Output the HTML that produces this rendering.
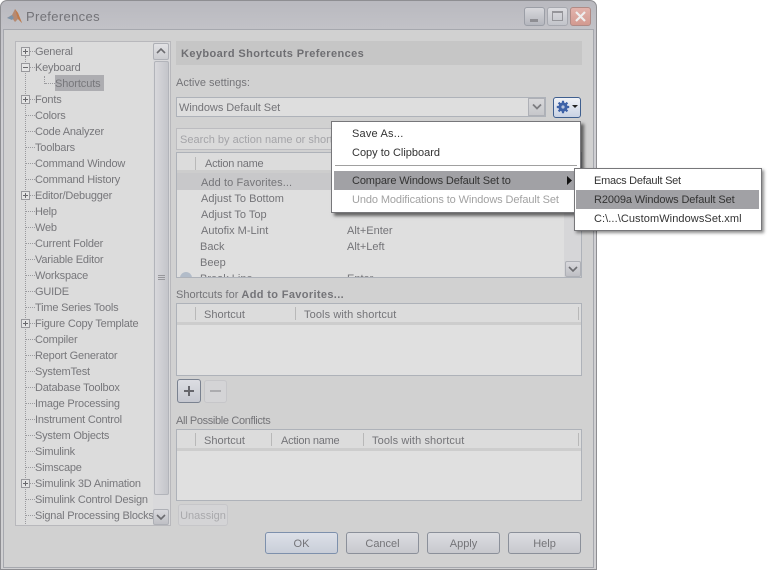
<!DOCTYPE html>
<html><head><meta charset="utf-8"><style>
html,body{margin:0;padding:0;background:#fff}
#r{position:relative;width:770px;height:570px;overflow:hidden;background:#fff;font:11px/16px "Liberation Sans",sans-serif;color:#77777b}
#r div,#r span.a{position:absolute}
.t{white-space:nowrap;height:16px;transform:translateY(1px)}
.tree{left:35px;letter-spacing:-.2px}
.h{color:#747478}
.box{background:#e0e0e0;border:1px solid #aeb2b9;box-sizing:border-box}
.btn{border:1px solid #8b909a;border-radius:3px;box-sizing:border-box;background:linear-gradient(#dcdde1,#c8c9ce);text-align:center;color:#747478;height:22px;line-height:22px;top:532px;width:73px}
.hd{background:#dcdcdc;border-bottom:3px solid #cdcdcd;box-sizing:border-box;height:20px}
.sep{width:1px;height:13px;background:#b8b8b8}
.m{color:#333;white-space:nowrap;height:16px;transform:translateY(1px)}
.pm{width:9px;height:9px;border:1px solid #98989c;box-sizing:border-box;background:#e4e4e4;left:21px}
.pm:before{content:"";position:absolute;left:1px;top:3px;width:5px;height:1px;background:#68686c}
.pl:after{content:"";position:absolute;left:3px;top:1px;width:1px;height:5px;background:#68686c}
.dh{height:0;border-top:1px dotted #9a9a9e}
.dv{width:0;border-left:1px dotted #9a9a9e}
</style></head><body><div id="r">

<!-- window -->
<div style="left:0;top:0;width:597px;height:570px;background:linear-gradient(#b9b9bf 0,#c4c4c9 34px,#cfcfd3 120px,#d0d0d2 100%);border:1px solid #8e8e92;border-bottom:0;border-radius:7px 7px 0 0;box-sizing:border-box"></div>
<div style="left:3px;top:29px;width:591px;height:539px;background:#d1d1d1;border:1px solid #a6a8ae;box-sizing:border-box"></div>
<div style="left:0;top:569px;width:597px;height:1px;background:#8e8e92"></div>

<!-- title -->
<svg style="position:absolute;left:6px;top:8px" width="17" height="17" viewBox="0 0 17 17"><path d="M1 10L6 7 9 1 12 5 16 15 12 11 9 14 6 10z" fill="#b58a72"/><path d="M1 10L6 7 8 10 6 12z" fill="#7d93a8"/><path d="M9 1L12 5 16 15 12 11z" fill="#c07a4a"/></svg>
<div class="t" style="left:26px;top:8px;font-size:13px;letter-spacing:.35px;color:#737378">Preferences</div>

<!-- window buttons -->
<div style="left:524px;top:7px;width:21px;height:19px;border:1px solid #9b9ea6;border-radius:3px;box-sizing:border-box;background:linear-gradient(#d8d8dc,#b4b6bd)"><div style="left:5px;top:11px;width:8px;height:3px;background:#8e8e93"></div></div>
<div style="left:547px;top:7px;width:21px;height:19px;border:1px solid #a6a8af;border-radius:3px;box-sizing:border-box;background:linear-gradient(#dcdce0,#c2c4ca)"><div style="left:4px;top:3px;width:11px;height:10px;border:1px solid #95959a;border-top-width:2px;box-sizing:border-box"></div></div>
<div style="left:570px;top:7px;width:21px;height:19px;border:1px solid #b08a85;border-radius:3px;box-sizing:border-box;background:linear-gradient(#e2b3ac,#d39a90)"><svg style="position:absolute;left:3px;top:2px" width="13" height="13"><path d="M2 2L11 11M11 2L2 11" stroke="#eee" stroke-width="2.2"/></svg></div>

<!-- tree panel -->
<div class="box" style="left:15px;top:41px;width:156px;height:485px;background:#dcdcdc;border-color:#b8b8bc"></div>
<div style="left:153px;top:42px;width:17px;height:483px;background:#d9d9db"></div>
<div style="left:153px;top:43px;width:16px;height:17px;border:1px solid #aeb0b6;border-radius:2px;box-sizing:border-box;background:linear-gradient(#e2e2e5,#cbccd0)"></div>
<svg style="position:absolute;left:156px;top:47px" width="10" height="8"><path d="M1 6L5 2 9 6" fill="none" stroke="#6c6c70" stroke-width="1.6"/></svg>
<div style="left:154px;top:61px;width:15px;height:434px;border:1px solid #b2b4ba;border-radius:2px;box-sizing:border-box;background:linear-gradient(90deg,#d8d8dc,#c4c5ca)"></div>
<div style="left:158px;top:275px;width:7px;height:1px;background:#97979b;box-shadow:0 2px #97979b,0 4px #97979b"></div>
<div style="left:153px;top:509px;width:16px;height:16px;border:1px solid #aeb0b6;border-radius:2px;box-sizing:border-box;background:linear-gradient(#d8d8dc,#bfc0c5)"></div>
<svg style="position:absolute;left:156px;top:513px" width="10" height="8"><path d="M1 2L5 6 9 2" fill="none" stroke="#6c6c70" stroke-width="1.6"/></svg>

<!-- tree guides -->
<div class="dv" style="left:25px;top:56px;height:468px"></div>
<div class="dv" style="left:44px;top:76px;height:8px"></div>
<div class="dh" style="left:45px;top:83px;width:10px"></div>
<div style="left:55px;top:75px;width:49px;height:16px;background:#adadb1"></div>

<div class="dh" style="left:30px;top:51px;width:5px"></div>
<div class="dh" style="left:30px;top:67px;width:5px"></div>
<div class="dh" style="left:30px;top:99px;width:5px"></div>
<div class="dh" style="left:26px;top:115px;width:9px"></div>
<div class="dh" style="left:26px;top:131px;width:9px"></div>
<div class="dh" style="left:26px;top:147px;width:9px"></div>
<div class="dh" style="left:26px;top:163px;width:9px"></div>
<div class="dh" style="left:26px;top:179px;width:9px"></div>
<div class="dh" style="left:30px;top:195px;width:5px"></div>
<div class="dh" style="left:26px;top:211px;width:9px"></div>
<div class="dh" style="left:26px;top:227px;width:9px"></div>
<div class="dh" style="left:26px;top:243px;width:9px"></div>
<div class="dh" style="left:26px;top:259px;width:9px"></div>
<div class="dh" style="left:26px;top:275px;width:9px"></div>
<div class="dh" style="left:26px;top:291px;width:9px"></div>
<div class="dh" style="left:26px;top:307px;width:9px"></div>
<div class="dh" style="left:30px;top:323px;width:5px"></div>
<div class="dh" style="left:26px;top:339px;width:9px"></div>
<div class="dh" style="left:26px;top:355px;width:9px"></div>
<div class="dh" style="left:26px;top:371px;width:9px"></div>
<div class="dh" style="left:26px;top:387px;width:9px"></div>
<div class="dh" style="left:26px;top:403px;width:9px"></div>
<div class="dh" style="left:26px;top:419px;width:9px"></div>
<div class="dh" style="left:26px;top:435px;width:9px"></div>
<div class="dh" style="left:26px;top:451px;width:9px"></div>
<div class="dh" style="left:26px;top:467px;width:9px"></div>
<div class="dh" style="left:30px;top:483px;width:5px"></div>
<div class="dh" style="left:26px;top:499px;width:9px"></div>
<div class="dh" style="left:26px;top:515px;width:9px"></div>

<div class="pm pl" style="top:47px"></div>
<div class="pm" style="top:63px"></div>
<div class="pm pl" style="top:95px"></div>
<div class="pm pl" style="top:191px"></div>
<div class="pm pl" style="top:319px"></div>
<div class="pm pl" style="top:479px"></div>

<div class="t tree" style="top:43px">General</div>
<div class="t tree" style="top:59px">Keyboard</div>
<div class="t" style="left:55px;top:75px;letter-spacing:-.1px">Shortcuts</div>
<div class="t tree" style="top:91px">Fonts</div>
<div class="t tree" style="top:107px">Colors</div>
<div class="t tree" style="top:123px">Code Analyzer</div>
<div class="t tree" style="top:139px">Toolbars</div>
<div class="t tree" style="top:155px">Command Window</div>
<div class="t tree" style="top:171px">Command History</div>
<div class="t tree" style="top:187px">Editor/Debugger</div>
<div class="t tree" style="top:203px">Help</div>
<div class="t tree" style="top:219px">Web</div>
<div class="t tree" style="top:235px">Current Folder</div>
<div class="t tree" style="top:251px">Variable Editor</div>
<div class="t tree" style="top:267px">Workspace</div>
<div class="t tree" style="top:283px">GUIDE</div>
<div class="t tree" style="top:299px">Time Series Tools</div>
<div class="t tree" style="top:315px">Figure Copy Template</div>
<div class="t tree" style="top:331px">Compiler</div>
<div class="t tree" style="top:347px">Report Generator</div>
<div class="t tree" style="top:363px">SystemTest</div>
<div class="t tree" style="top:379px">Database Toolbox</div>
<div class="t tree" style="top:395px">Image Processing</div>
<div class="t tree" style="top:411px">Instrument Control</div>
<div class="t tree" style="top:427px">System Objects</div>
<div class="t tree" style="top:443px">Simulink</div>
<div class="t tree" style="top:459px">Simscape</div>
<div class="t tree" style="top:475px">Simulink 3D Animation</div>
<div class="t tree" style="top:491px">Simulink Control Design</div>
<div class="t tree" style="top:507px;width:118px;overflow:hidden">Signal Processing Blocksets</div>

<!-- right header -->
<div style="left:176px;top:41px;width:406px;height:24px;background:#c6c6c6"></div>
<div class="t" style="left:181px;top:45px;font-weight:bold;letter-spacing:.4px;color:#6e6e72">Keyboard Shortcuts Preferences</div>
<div class="t h" style="left:176px;top:74px">Active settings:</div>

<!-- combo -->
<div class="box" style="left:176px;top:97px;width:370px;height:20px;background:#dedede"></div>
<div class="t h" style="left:179px;top:99px;letter-spacing:-.05px">Windows Default Set</div>
<div style="left:528px;top:98px;width:17px;height:18px;border:1px solid #aeb0b6;box-sizing:border-box;background:linear-gradient(#d8d8da,#c6c7cb)"></div>
<svg style="position:absolute;left:532px;top:103px" width="10" height="8"><path d="M1 1.5L5 5.5 9 1.5" fill="none" stroke="#7c7c80" stroke-width="1.8"/></svg>

<!-- gear button -->
<div style="left:553px;top:97px;width:28px;height:21px;border:1px solid #3f5f8f;border-radius:3px;box-sizing:border-box;background:linear-gradient(#f0f2f7,#c9d2e4)"></div>
<svg style="position:absolute;left:556px;top:100px" width="14" height="14" viewBox="0 0 14 14"><circle cx="7" cy="7" r="4.6" fill="#3e62a8"/><path d="M7 .8V13.2M.8 7H13.2M2.6 2.6L11.4 11.4M11.4 2.6L2.6 11.4" stroke="#3e62a8" stroke-width="2.2"/><circle cx="7" cy="7" r="1.6" fill="#b5c3de"/></svg>
<svg style="position:absolute;left:572px;top:105px" width="6" height="4"><path d="M0 0H6L3 3z" fill="#222"/></svg>

<!-- search -->
<div class="box" style="left:176px;top:128px;width:160px;height:22px;background:#dadada;border-color:#bcbcc0"></div>
<div class="t" style="left:180px;top:131px;color:#a4a4a8;width:152px;overflow:hidden">Search by action name or shortcut</div>

<!-- action table -->
<div class="box" style="left:176px;top:152px;width:406px;height:126px;background:#dfdfdf;overflow:hidden"></div>
<div class="hd" style="left:177px;top:153px;width:404px;height:20px"></div>
<div class="sep" style="left:195px;top:157px"></div>
<div class="t h" style="left:205px;top:155px;letter-spacing:-.25px">Action name</div>
<div style="left:177px;top:173px;width:154px;height:17px;background:#c8c8ca"></div>
<div class="t h" style="left:201px;top:174px;letter-spacing:.1px">Add to Favorites...</div>
<div class="t h" style="left:201px;top:190px">Adjust To Bottom</div>
<div class="t h" style="left:201px;top:206px">Adjust To Top</div>
<div class="t h" style="left:201px;top:222px">Autofix M-Lint</div>
<div class="t h" style="left:200px;top:238px">Back</div>
<div class="t h" style="left:200px;top:254px">Beep</div>
<div style="left:200px;top:271px;height:6px;overflow:hidden;width:70px;line-height:16px;white-space:nowrap">Break Line</div>
<div class="t h" style="left:347px;top:222px">Alt+Enter</div>
<div class="t h" style="left:347px;top:238px">Alt+Left</div>
<div style="left:347px;top:271px;height:6px;overflow:hidden;width:40px;line-height:16px">Enter</div>
<div style="left:180px;top:272px;width:12px;height:12px;border-radius:50%;background:#b2bcc9;clip-path:inset(0 0 7px 0)"></div>
<div style="left:564px;top:173px;width:17px;height:104px;background:#d6d6d8"></div>
<div style="left:565px;top:261px;width:16px;height:16px;border:1px solid #aeb0b6;border-radius:2px;box-sizing:border-box;background:linear-gradient(#d8d8dc,#bfc0c5)"></div>
<svg style="position:absolute;left:568px;top:265px" width="10" height="8"><path d="M1 2L5 6 9 2" fill="none" stroke="#6c6c70" stroke-width="1.6"/></svg>

<!-- shortcuts for -->
<div class="t h" style="left:176px;top:286px">Shortcuts for <b style="letter-spacing:.35px">Add to Favorites...</b></div>
<div class="box" style="left:176px;top:303px;width:406px;height:73px"></div>
<div class="hd" style="left:177px;top:304px;width:404px;height:21px"></div>
<div class="sep" style="left:195px;top:307px"></div>
<div class="sep" style="left:295px;top:307px"></div>
<div class="sep" style="left:578px;top:307px"></div>
<div class="t h" style="left:204px;top:306px">Shortcut</div>
<div class="t h" style="left:304px;top:306px;letter-spacing:.1px">Tools with shortcut</div>

<!-- plus minus -->
<div style="left:177px;top:379px;width:24px;height:24px;border:1px solid #7a8290;border-radius:3px;box-sizing:border-box;background:linear-gradient(#dcdde2,#c6c8d0)"></div>
<div style="left:184px;top:390px;width:10px;height:2px;background:#66666c"></div>
<div style="left:188px;top:386px;width:2px;height:10px;background:#66666c"></div>
<div style="left:204px;top:380px;width:23px;height:23px;border:1px solid #c6c6c9;border-radius:3px;box-sizing:border-box;background:#d4d4d6"></div>
<div style="left:210px;top:390px;width:11px;height:2px;background:#acacaf"></div>

<!-- conflicts -->
<div class="t h" style="left:176px;top:412px;letter-spacing:-.35px">All Possible Conflicts</div>
<div class="box" style="left:176px;top:429px;width:406px;height:72px"></div>
<div class="hd" style="left:177px;top:430px;width:404px;height:21px"></div>
<div class="sep" style="left:195px;top:433px"></div>
<div class="sep" style="left:271px;top:433px"></div>
<div class="sep" style="left:363px;top:433px"></div>
<div class="sep" style="left:578px;top:433px"></div>
<div class="t h" style="left:204px;top:432px">Shortcut</div>
<div class="t h" style="left:281px;top:432px;letter-spacing:-.25px">Action name</div>
<div class="t h" style="left:372px;top:432px;letter-spacing:.1px">Tools with shortcut</div>

<!-- unassign -->
<div style="left:178px;top:504px;width:50px;height:22px;border:1px solid #c6c6c9;border-radius:3px;box-sizing:border-box;background:#d4d4d6;color:#a9a9ac;text-align:center;line-height:22px">Unassign</div>

<!-- bottom buttons -->
<div class="btn" style="left:265px;border-color:#7d90ac;background:linear-gradient(#dde0e8,#c9ced8)">OK</div>
<div class="btn" style="left:346px">Cancel</div>
<div class="btn" style="left:427px">Apply</div>
<div class="btn" style="left:508px">Help</div>

<!-- main menu -->
<div style="left:331px;top:121px;width:250px;height:92px;background:#fff;border:1px solid #77777a;box-sizing:border-box;box-shadow:3px 3px 3px rgba(0,0,0,.55)"></div>
<div class="m" style="left:352px;top:125px;letter-spacing:.2px">Save As...</div>
<div class="m" style="left:352px;top:144px">Copy to Clipboard</div>
<div style="left:335px;top:165px;width:242px;height:1px;background:#a0a0a0"></div>
<div style="left:334px;top:171px;width:242px;height:19px;background:#a1a1a5"></div>
<div class="m" style="left:352px;top:172px;letter-spacing:-.13px">Compare Windows Default Set to</div>
<svg style="position:absolute;left:567px;top:176px" width="6" height="9"><path d="M0 0L5 4.5 0 9z" fill="#111"/></svg>
<div class="m" style="left:352px;top:191px;color:#a2a2a2;letter-spacing:-.1px">Undo Modifications to Windows Default Set</div>

<!-- submenu -->
<div style="left:574px;top:168px;width:188px;height:63px;background:#fff;border:1px solid #77777a;box-sizing:border-box;box-shadow:2px 2px 3px rgba(0,0,0,.45)"></div>
<div style="left:576px;top:190px;width:183px;height:19px;background:#a1a1a5"></div>
<div class="m" style="left:594px;top:172px;letter-spacing:-.25px">Emacs Default Set</div>
<div class="m" style="left:594px;top:191px;letter-spacing:-.12px">R2009a Windows Default Set</div>
<div class="m" style="left:594px;top:210px;letter-spacing:.08px">C:\...\CustomWindowsSet.xml</div>

</div></body></html>
